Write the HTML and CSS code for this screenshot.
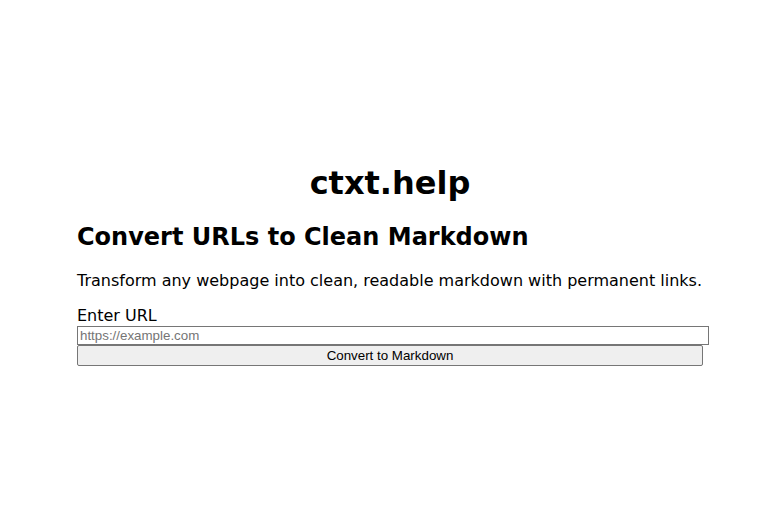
FILE: index.html
```html
<!DOCTYPE html>
<html lang="en">
<head>
<meta charset="utf-8">
<title>ctxt.help</title>
<link rel="stylesheet" href="styles.css">
</head>
<body>
<main class="page">
  <div class="container">
    <h1 class="title">ctxt.help</h1>
    <h2 class="subtitle">Convert URLs to Clean Markdown</h2>
    <p class="lead">Transform any webpage into clean, readable markdown with permanent links.</p>
    <form class="form">
      <label class="label" for="url">Enter URL</label>
      <input class="input" id="url" type="url" placeholder="https://example.com">
      <button class="button" type="submit">Convert to Markdown</button>
    </form>
  </div>
</main>
</body>
</html>
```
FILE: styles.css
```css
html, body {
  margin: 0;
  padding: 0;
  background: #ffffff;
}
body {
  font-family: "DejaVu Sans", sans-serif;
  color: #000000;
}
.page {
  min-height: 100vh;
  display: flex;
  align-items: center;
  justify-content: center;
}
.container {
  width: 626px;
}
.title {
  font-size: 32px;
  font-weight: bold;
  text-align: center;
  margin: 20.44px 0 21.44px;
}
.subtitle {
  font-size: 24px;
  font-weight: bold;
  margin: 19.92px 0;
}
.lead {
  font-size: 16px;
  margin: 16px 0;
}
.form {
  margin: 0;
}
.label {
  display: block;
  font-size: 16px;
  margin-bottom: 1px;
}
.input {
  display: block;
  box-sizing: content-box;
  width: 100%;
  margin: 0;
  padding: 1px 2px;
  border: 1px solid #767676;
  font-family: "Liberation Sans", Arial, sans-serif;
  font-size: 13.333px;
  line-height: normal;
  height: 15px;
  background: #ffffff;
}
.input::placeholder {
  color: #757575;
}
.button {
  display: block;
  box-sizing: border-box;
  width: 100%;
  margin: 0;
  padding: 1px 6px;
  height: 21px;
  border: 1px solid #767676;
  border-radius: 2px;
  background: #efefef;
  color: #000000;
  font-family: "Liberation Sans", Arial, sans-serif;
  font-size: 13.333px;
}
```
